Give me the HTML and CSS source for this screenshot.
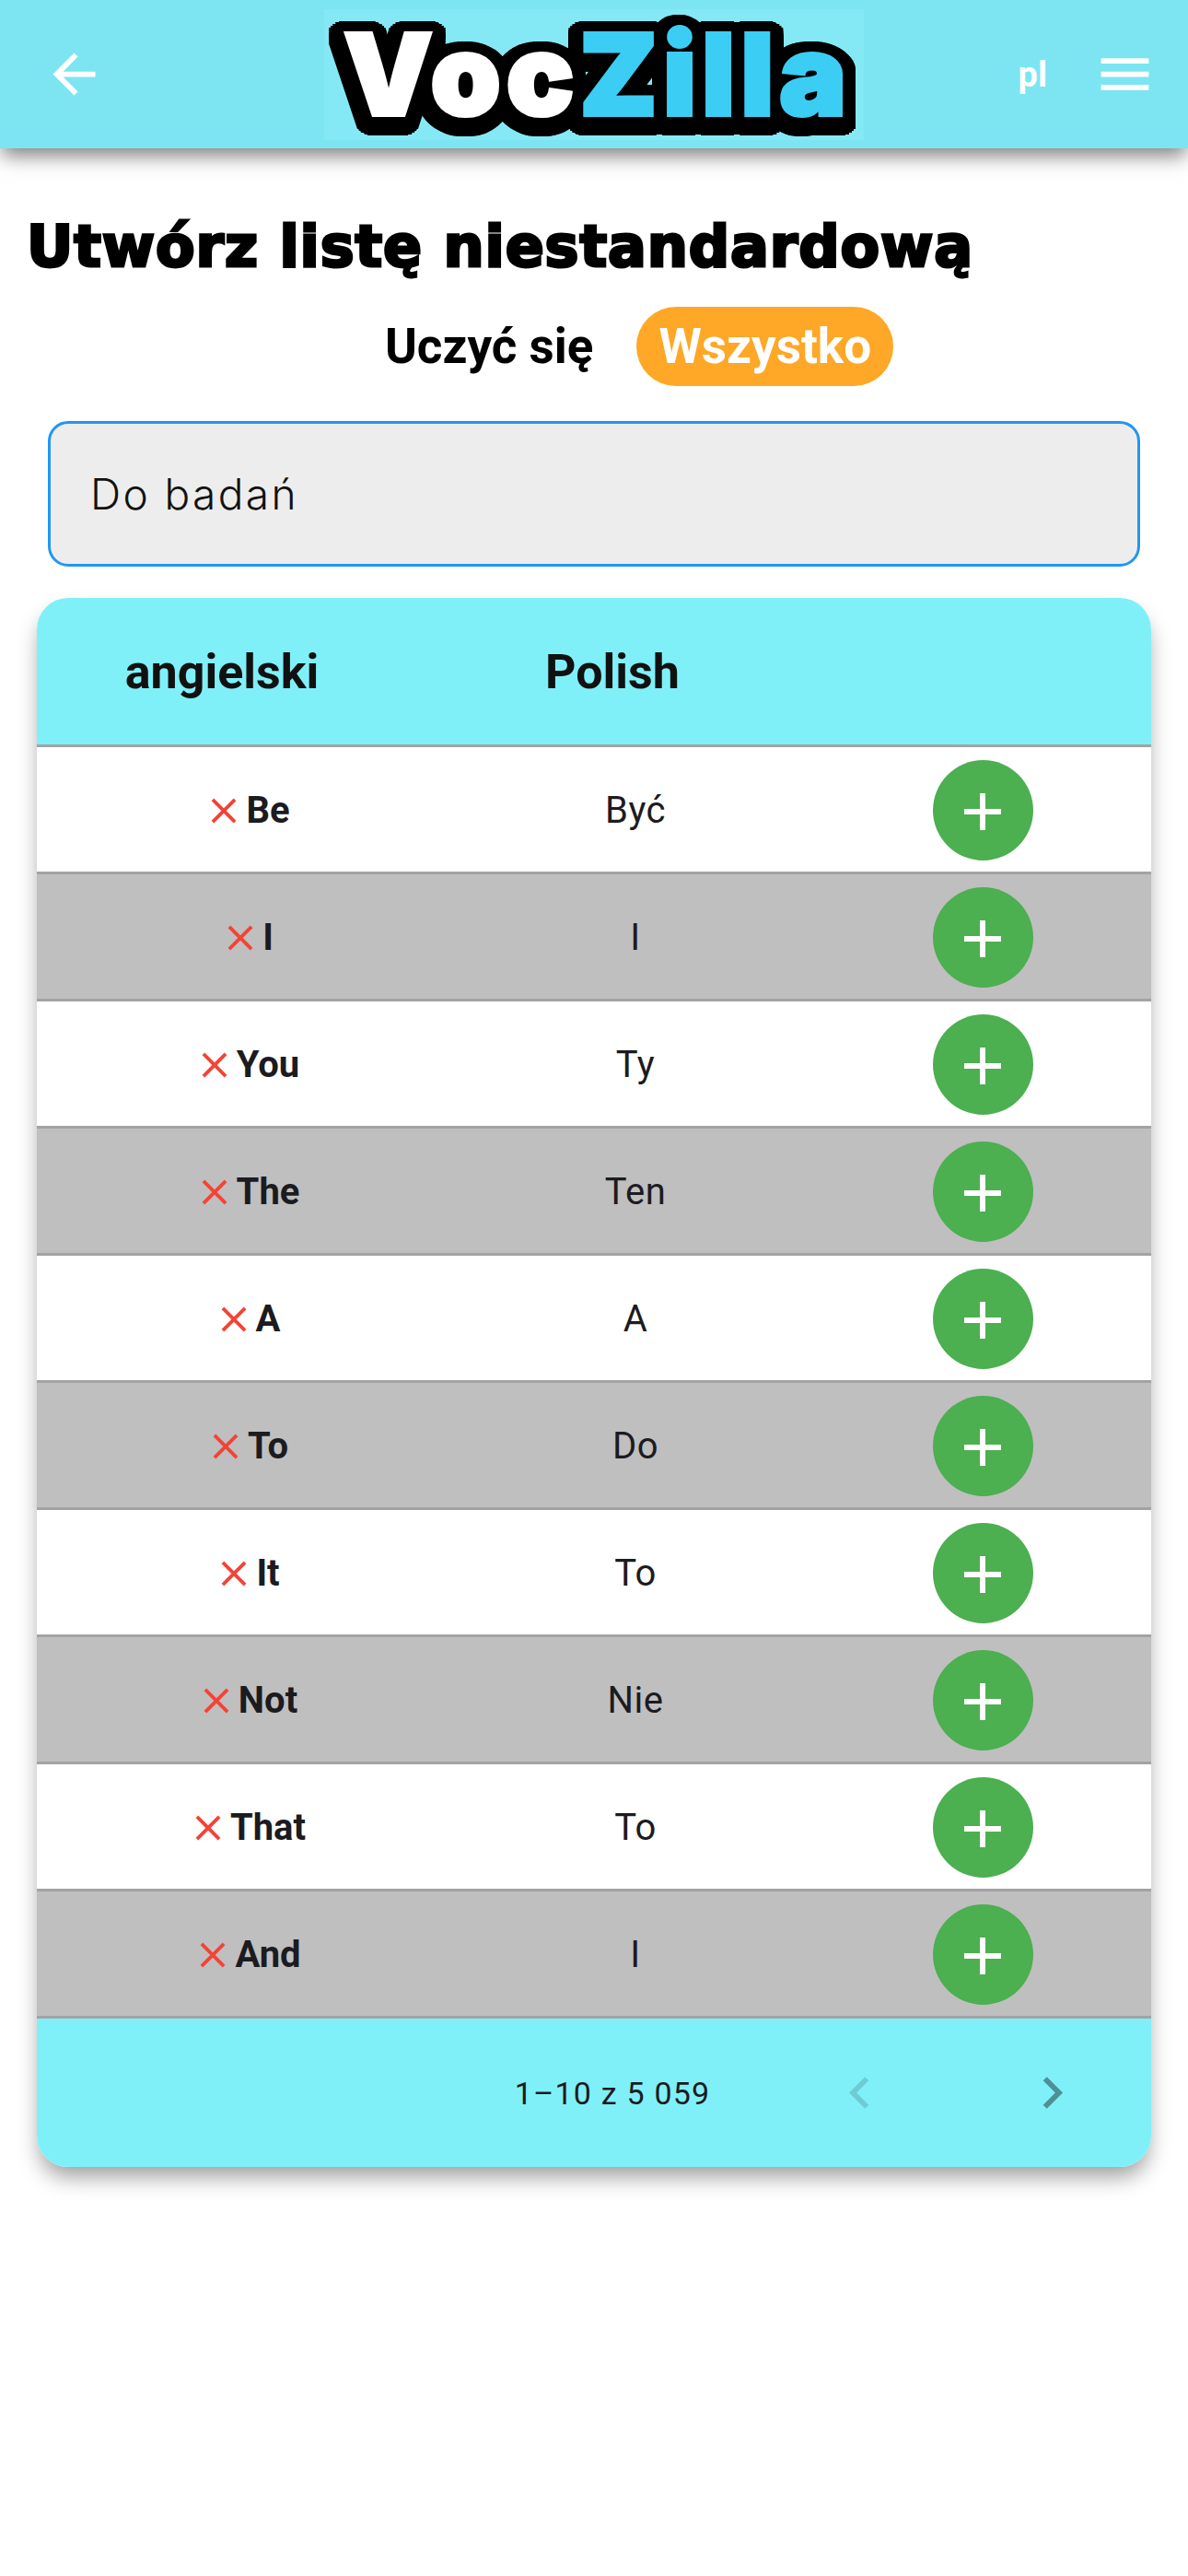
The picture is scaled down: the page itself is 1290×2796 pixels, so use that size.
FILE: index.html
```html
<!DOCTYPE html>
<html lang="pl">
<head>
    <meta charset="UTF-8">
    <title>VocZilla</title>
    <link rel="stylesheet" href="styles.css">
</head>
<body>
    <svg class="icon-defs" width="0" height="0">
        <symbol id="i-close" viewBox="0 0 24 24"><path d="M19 6.41L17.59 5 12 10.59 6.41 5 5 6.41 10.59 12 5 17.59 6.41 19 12 13.41 17.59 19 19 17.59 13.41 12z"/></symbol>
        <symbol id="i-plus" viewBox="0 0 40 40"><path d="M17 0h6v17h17v6H23v17h-6V23H0v-6h17z"/></symbol>
    </svg>

    <header class="topbar">
        <div class="topbar-left">
            <svg class="bar-icon" viewBox="0 0 24 24"><path d="M20 11H7.83l5.59-5.59L12 4l-8 8 8 8 1.41-1.41L7.83 13H20v-2z"/></svg>
        </div>
        <div class="logo"><span class="logo-text"><span class="logo-voc">Voc</span><span class="logo-zilla">Zilla</span></span></div>
        <div class="topbar-right">
            <span class="lang">pl</span>
            <svg class="bar-icon" viewBox="0 0 24 24"><path d="M3 18h18v-2H3v2zm0-5h18v-2H3v2zm0-7v2h18V6H3z"/></svg>
        </div>
    </header>

    <main class="content">
        <h1 class="page-title">Utwórz listę niestandardową</h1>

        <div class="filter">
            <span class="filter-item">Uczyć się</span>
            <span class="filter-item active">Wszystko</span>
        </div>

        <div class="name-field">Do badań</div>

        <section class="word-table">
            <div class="table-head">
                <span>angielski</span>
                <span>Polish</span>
            </div>

            <div class="row">
                <div class="word"><svg class="x-icon"><use href="#i-close"/></svg><b>Be</b></div>
                <div class="meaning">Być</div>
                <div class="add"><span class="add-btn"><svg><use href="#i-plus"/></svg></span></div>
            </div>
            <div class="row">
                <div class="word"><svg class="x-icon"><use href="#i-close"/></svg><b>I</b></div>
                <div class="meaning">I</div>
                <div class="add"><span class="add-btn"><svg><use href="#i-plus"/></svg></span></div>
            </div>
            <div class="row">
                <div class="word"><svg class="x-icon"><use href="#i-close"/></svg><b>You</b></div>
                <div class="meaning">Ty</div>
                <div class="add"><span class="add-btn"><svg><use href="#i-plus"/></svg></span></div>
            </div>
            <div class="row">
                <div class="word"><svg class="x-icon"><use href="#i-close"/></svg><b>The</b></div>
                <div class="meaning">Ten</div>
                <div class="add"><span class="add-btn"><svg><use href="#i-plus"/></svg></span></div>
            </div>
            <div class="row">
                <div class="word"><svg class="x-icon"><use href="#i-close"/></svg><b>A</b></div>
                <div class="meaning">A</div>
                <div class="add"><span class="add-btn"><svg><use href="#i-plus"/></svg></span></div>
            </div>
            <div class="row">
                <div class="word"><svg class="x-icon"><use href="#i-close"/></svg><b>To</b></div>
                <div class="meaning">Do</div>
                <div class="add"><span class="add-btn"><svg><use href="#i-plus"/></svg></span></div>
            </div>
            <div class="row">
                <div class="word"><svg class="x-icon"><use href="#i-close"/></svg><b>It</b></div>
                <div class="meaning">To</div>
                <div class="add"><span class="add-btn"><svg><use href="#i-plus"/></svg></span></div>
            </div>
            <div class="row">
                <div class="word"><svg class="x-icon"><use href="#i-close"/></svg><b>Not</b></div>
                <div class="meaning">Nie</div>
                <div class="add"><span class="add-btn"><svg><use href="#i-plus"/></svg></span></div>
            </div>
            <div class="row">
                <div class="word"><svg class="x-icon"><use href="#i-close"/></svg><b>That</b></div>
                <div class="meaning">To</div>
                <div class="add"><span class="add-btn"><svg><use href="#i-plus"/></svg></span></div>
            </div>
            <div class="row">
                <div class="word"><svg class="x-icon"><use href="#i-close"/></svg><b>And</b></div>
                <div class="meaning">I</div>
                <div class="add"><span class="add-btn"><svg><use href="#i-plus"/></svg></span></div>
            </div>

            <div class="table-foot">
                <span class="page-count">1–10 z 5 059</span>
                <svg class="chevron prev" viewBox="0 0 24 24"><path d="M15.41 7.41L14 6l-6 6 6 6 1.41-1.41L10.83 12z"/></svg>
                <svg class="chevron next" viewBox="0 0 24 24"><path d="M10 6L8.59 7.41 13.17 12l-4.58 4.59L10 18l6-6z"/></svg>
            </div>
        </section>
    </main>
</body>
</html>
```

FILE: styles.css
```css
* {
    box-sizing: border-box;
}

body {
    margin: 0;
    background-color: #fff;
    font-family: Roboto, "Liberation Sans", sans-serif;
    color: #1c1b1f;
}

.icon-defs {
    position: absolute;
}

/* Top bar */
.topbar {
    display: grid;
    grid-template-columns: 1fr 586px 1fr;
    align-items: center;
    height: 161px;
    background-color: #7de5f2;
    box-shadow: 0 10px 20px -2px rgba(0, 0, 0, 0.5);
}

.topbar-left {
    padding-left: 46px;
    display: flex;
}

.topbar-right {
    display: flex;
    align-items: center;
    justify-content: flex-end;
    gap: 50px;
    padding-right: 34px;
}

.bar-icon {
    display: block;
    width: 69px;
    height: 69px;
    fill: #fff;
}

.lang {
    color: #fff;
    font-size: 38px;
    font-weight: 700;
}

/* Logo */
.logo {
    display: flex;
    align-items: center;
    justify-content: center;
    height: 142px;
    padding-left: 8px;
    background-color: #84e9f4;
}

.logo-text {
    display: block;
    font-family: Inter, sans-serif;
    font-size: 122px;
    font-weight: 900;
    line-height: 142px;
    letter-spacing: 6px;
    -webkit-text-stroke: 4px;
    filter: drop-shadow(4px 0 0 #000) drop-shadow(-4px 0 0 #000)
        drop-shadow(3.4px 1.2px 0 #000) drop-shadow(-3.4px -1.2px 0 #000)
        drop-shadow(2px 2px 0 #000) drop-shadow(-2px -2px 0 #000)
        drop-shadow(0 2.5px 0 #000) drop-shadow(0 -2.5px 0 #000)
        drop-shadow(-2px 2px 0 #000) drop-shadow(2px -2px 0 #000)
        drop-shadow(-3.4px 1.2px 0 #000) drop-shadow(3.4px -1.2px 0 #000)
        drop-shadow(0 6px 0 #000) drop-shadow(0 6px 0 #000);
}

.logo-voc {
    color: #fff;
}

.logo-zilla {
    color: #3bcdf3;
}

/* Page content */
.content {
    padding: 0 40px 444px;
}

.page-title {
    margin: 0 -11px;
    padding-top: 69px;
    font-family: "DejaVu Sans", sans-serif;
    font-size: 62px;
    font-weight: 700;
    line-height: 76px;
    letter-spacing: 0.9px;
    color: #000;
    white-space: nowrap;
    -webkit-text-stroke: 3px #000;
}

.filter {
    display: flex;
    align-items: center;
    justify-content: center;
    gap: 47px;
    margin-top: 27px;
    padding-left: 98px;
}

.filter-item {
    font-size: 53px;
    font-weight: 700;
    line-height: 86px;
    color: #000;
}

.filter-item.active {
    padding: 0 24px;
    border-radius: 43px;
    background-color: #ffa726;
    color: #fff;
}

.name-field {
    display: flex;
    align-items: center;
    height: 158px;
    margin: 38px 12px 34px;
    padding-left: 43px;
    border: 3px solid #2196f3;
    border-radius: 22px;
    background-color: #eeeded;
    font-family: Inter, sans-serif;
    font-size: 46px;
    font-weight: 300;
    letter-spacing: 2.4px;
    color: #111;
}

/* Table */
.word-table {
    border-radius: 34px;
    overflow: hidden;
    box-shadow: 0 14px 24px -4px rgba(0, 0, 0, 0.4);
}

.table-head {
    display: grid;
    grid-template-columns: 402px 446px 1fr;
    align-items: center;
    height: 162px;
    padding-top: 2px;
    border-bottom: 3px solid #a3a3a3;
    background-color: #80f0f8;
    text-align: center;
    font-size: 52px;
    font-weight: 700;
    color: #111;
}

.row {
    display: grid;
    grid-template-columns: 462px 376px 1fr;
    align-items: center;
    height: 138px;
    padding-top: 2px;
    border-bottom: 3px solid #a3a3a3;
    background-color: #fff;
    font-size: 40px;
}

.row:nth-of-type(odd) {
    background-color: #bfbfbf;
}

.word {
    display: flex;
    align-items: center;
    justify-content: center;
    padding-right: 7px;
}

.word b {
    font-weight: 700;
}

.x-icon {
    width: 46px;
    height: 46px;
    margin-right: 1px;
    fill: #f44336;
}

.meaning {
    text-align: center;
    letter-spacing: 0.5px;
}

.add {
    display: flex;
    justify-content: center;
    padding-left: 6px;
}

.add-btn {
    display: flex;
    align-items: center;
    justify-content: center;
    width: 109px;
    height: 109px;
    border-radius: 50%;
    background-color: #4caf50;
}

.add-btn svg {
    width: 40px;
    height: 40px;
    margin-top: 3px;
    fill: #fff;
}

.table-foot {
    display: flex;
    align-items: center;
    height: 161px;
    background-color: #80f0f8;
}

.page-count {
    width: 248px;
    margin-left: 501px;
    text-align: center;
    font-size: 34px;
    letter-spacing: 1.2px;
    color: #1c1b1f;
}

.chevron {
    width: 69px;
    height: 69px;
}

.prev {
    margin-left: 110px;
    fill: rgba(0, 0, 0, 0.15);
}

.next {
    margin-left: 140px;
    fill: rgba(0, 0, 0, 0.4);
}
```
